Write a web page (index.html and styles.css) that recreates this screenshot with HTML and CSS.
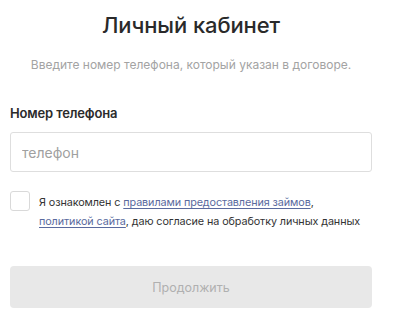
FILE: index.html
```html
<!DOCTYPE html>
<html lang="ru">
<head>
<meta charset="utf-8">
<link rel="stylesheet" href="styles.css">
</head>
<body>
<main class="card">
  <h1 class="title">Личный кабинет</h1>
  <p class="subtitle">Введите номер телефона, который указан в договоре.</p>
  <label class="label" for="phone">Номер телефона</label>
  <input class="input" id="phone" type="text" placeholder="телефон">
  <div class="agree">
    <span class="checkbox"></span>
    <p class="agree-text">Я ознакомлен с <a href="#">правилами предоставления займов</a>,<br><a href="#">политикой сайта</a>, даю согласие на обработку личных данных</p>
  </div>
  <button class="button" type="button">Продолжить</button>
</main>
</body>
</html>
```
FILE: styles.css
```css
* { box-sizing: border-box; }
html, body { margin: 0; padding: 0; background: #fff; }
body {
  font-family: Inter, "Noto Sans", sans-serif;
  color: #2b2b2b;
  width: 404px;
  height: 320px;
  overflow: hidden;
}
.card {
  display: flex;
  flex-direction: column;
  width: 362px;
  margin-left: 10px;
  padding-top: 11px;
}
.title {
  margin: 0;
  font-size: 22px;
  line-height: 28px;
  font-weight: 500;
  text-align: center;
  color: #2a2a2a;
  letter-spacing: -0.1px;
}
.subtitle {
  margin: 17px 0 0;
  font-size: 12px;
  line-height: 18px;
  color: #a3a3a3;
  text-align: center;
}
.label {
  margin-top: 30px;
  font-size: 13px;
  line-height: 18px;
  font-weight: 600;
  color: #2b2b2b;
  letter-spacing: -0.15px;
}
.input {
  margin-top: 10px;
  height: 40px;
  border: 1px solid #dedede;
  border-radius: 3px;
  padding: 0 11px;
  font-family: inherit;
  font-size: 14px;
  color: #333;
  outline: none;
}
.input::placeholder { color: #a0a0a0; }
.agree {
  display: flex;
  gap: 9px;
  margin-top: 19px;
}
.checkbox {
  flex: none;
  width: 20px;
  height: 20px;
  border: 1px solid #d9d9d9;
  border-radius: 3px;
}
.agree-text {
  margin: 3px 0 0;
  font-size: 10.8px;
  line-height: 18.5px;
  letter-spacing: -0.1px;
  color: #333;
}
.agree-text a {
  color: #5a6a9e;
  text-decoration: underline;
  text-underline-offset: 2px;
}
.button {
  margin-top: 35px;
  height: 42px;
  border: none;
  border-radius: 4px;
  background: #e8e8e8;
  color: #b0b0b0;
  font-family: inherit;
  font-size: 12.5px;
}
```
